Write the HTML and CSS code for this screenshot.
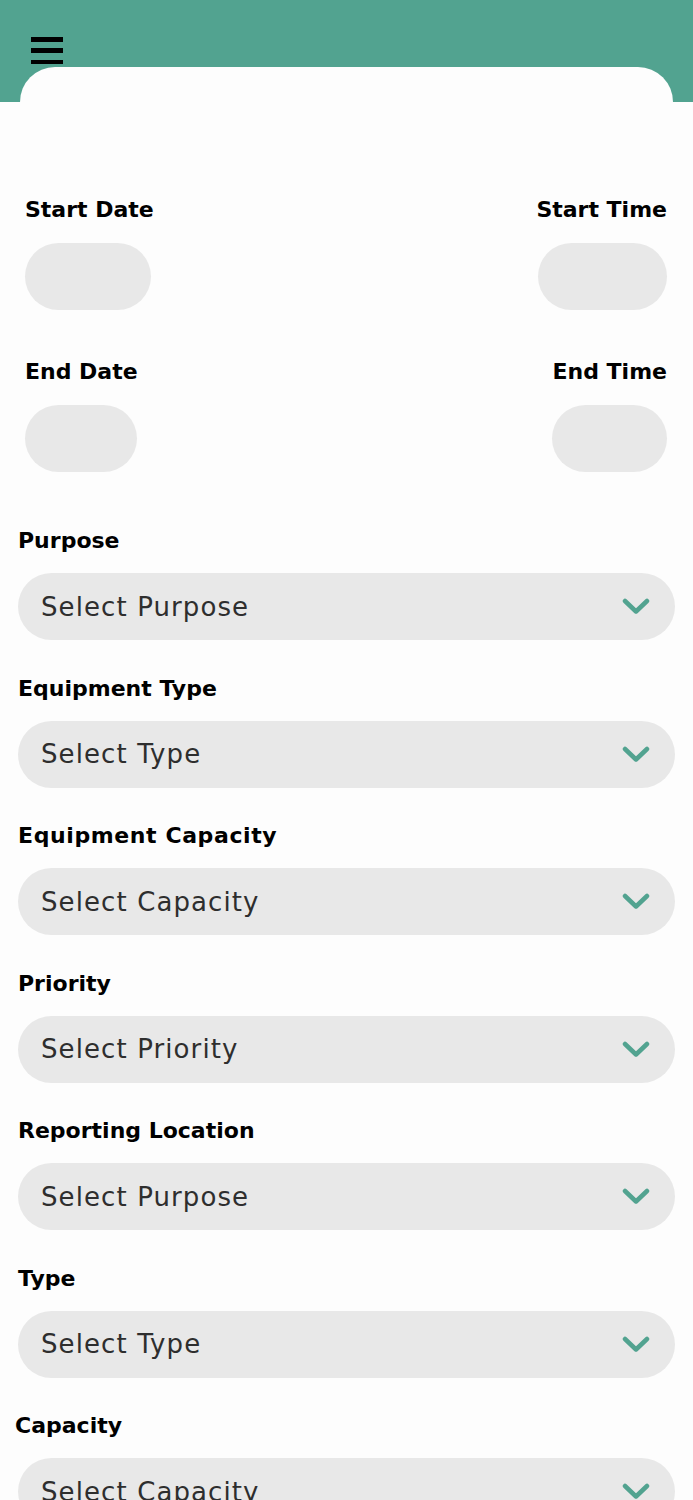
FILE: index.html
```html
<!DOCTYPE html>
<html lang="en">
<head>
<meta charset="utf-8">
<title>Booking Form</title>
<link rel="stylesheet" href="styles.css">
</head>
<body>
<header class="topbar">
  <button class="menu-btn" aria-label="Menu">
    <span class="bar"></span><span class="bar"></span><span class="bar"></span>
  </button>
  <div class="sheet-cap"></div>
</header>

<main class="form">
  <div class="date-row">
    <div class="date-field">
      <span class="label">Start Date</span>
      <div class="pill pill-start-date"></div>
    </div>
    <div class="date-field date-field-right">
      <span class="label">Start Time</span>
      <div class="pill pill-start-time"></div>
    </div>
  </div>
  <div class="date-row date-row-second">
    <div class="date-field">
      <span class="label">End Date</span>
      <div class="pill pill-end-date"></div>
    </div>
    <div class="date-field date-field-right">
      <span class="label">End Time</span>
      <div class="pill pill-end-time"></div>
    </div>
  </div>

  <div class="selects">
    <div class="select-field">
      <span class="label">Purpose</span>
      <div class="select"><span class="placeholder">Select Purpose</span><svg class="chev" viewBox="0 0 28 17"><path d="M3 3 L14 13.5 L25 3"/></svg></div>
    </div>
    <div class="select-field">
      <span class="label">Equipment Type</span>
      <div class="select"><span class="placeholder">Select Type</span><svg class="chev" viewBox="0 0 28 17"><path d="M3 3 L14 13.5 L25 3"/></svg></div>
    </div>
    <div class="select-field">
      <span class="label label-wide">Equipment Capacity</span>
      <div class="select"><span class="placeholder">Select Capacity</span><svg class="chev" viewBox="0 0 28 17"><path d="M3 3 L14 13.5 L25 3"/></svg></div>
    </div>
    <div class="select-field">
      <span class="label">Priority</span>
      <div class="select"><span class="placeholder">Select Priority</span><svg class="chev" viewBox="0 0 28 17"><path d="M3 3 L14 13.5 L25 3"/></svg></div>
    </div>
    <div class="select-field">
      <span class="label">Reporting Location</span>
      <div class="select"><span class="placeholder">Select Purpose</span><svg class="chev" viewBox="0 0 28 17"><path d="M3 3 L14 13.5 L25 3"/></svg></div>
    </div>
    <div class="select-field">
      <span class="label">Type</span>
      <div class="select"><span class="placeholder">Select Type</span><svg class="chev" viewBox="0 0 28 17"><path d="M3 3 L14 13.5 L25 3"/></svg></div>
    </div>
    <div class="select-field">
      <span class="label label-shift">Capacity</span>
      <div class="select"><span class="placeholder">Select Capacity</span><svg class="chev" viewBox="0 0 28 17"><path d="M3 3 L14 13.5 L25 3"/></svg></div>
    </div>
  </div>
</main>
</body>
</html>
```

FILE: styles.css
```css
* { box-sizing: border-box; }

html, body {
  margin: 0;
  padding: 0;
  background: #fdfdfd;
  font-family: "DejaVu Sans", "Inter", sans-serif;
  color: #000;
}

.topbar {
  height: 102px;
  background: #52a390;
  display: flex;
  flex-direction: column;
  justify-content: space-between;
  padding-top: 37px;
  overflow: hidden;
}

.menu-btn {
  border: 0;
  background: none;
  padding: 0;
  margin-left: 31px;
  width: 32px;
  height: 27px;
  display: flex;
  flex-direction: column;
  justify-content: space-between;
  cursor: pointer;
}

.bar {
  display: block;
  width: 32px;
  height: 4.5px;
  background: #000;
}

.sheet-cap {
  height: 35px;
  margin: 0 20px;
  background: #fdfdfd;
  border-radius: 50px 50px 0 0;
}

.form {
  padding-top: 94px;
  padding-bottom: 40px;
}

.label {
  display: block;
  font-size: 22px;
  line-height: 28px;
  font-weight: 700;
  color: #000;
  white-space: nowrap;
}

.label-wide {
  letter-spacing: 0.6px;
}

.date-row {
  display: flex;
  justify-content: space-between;
  padding: 0 26px 0 25px;
}

.date-row-second {
  margin-top: 48px;
}

.date-field {
  display: flex;
  flex-direction: column;
  align-items: flex-start;
  gap: 19px;
}

.date-field-right {
  align-items: flex-end;
}

.pill {
  height: 67px;
  border-radius: 34px;
  background: #e8e8e8;
}

.pill-start-date { width: 126px; }
.pill-start-time { width: 129px; }
.pill-end-date { width: 112px; }
.pill-end-time { width: 115px; }

.selects {
  margin-top: 55px;
  padding: 0 18px;
  display: flex;
  flex-direction: column;
  gap: 34.5px;
}

.select-field {
  display: flex;
  flex-direction: column;
  gap: 18px;
}

.label-shift {
  margin-left: -3px;
}

.select {
  height: 67px;
  border-radius: 34px;
  background: #e8e8e8;
  display: flex;
  align-items: center;
  justify-content: space-between;
  padding: 0 25px 0 23px;
}

.placeholder {
  font-size: 26px;
  font-weight: 400;
  letter-spacing: 1.1px;
  color: #2e2e2e;
  white-space: nowrap;
}

.chev {
  width: 28px;
  height: 17px;
  fill: none;
  stroke: #52a390;
  stroke-width: 4.5;
  stroke-linecap: round;
  stroke-linejoin: round;
}
```
